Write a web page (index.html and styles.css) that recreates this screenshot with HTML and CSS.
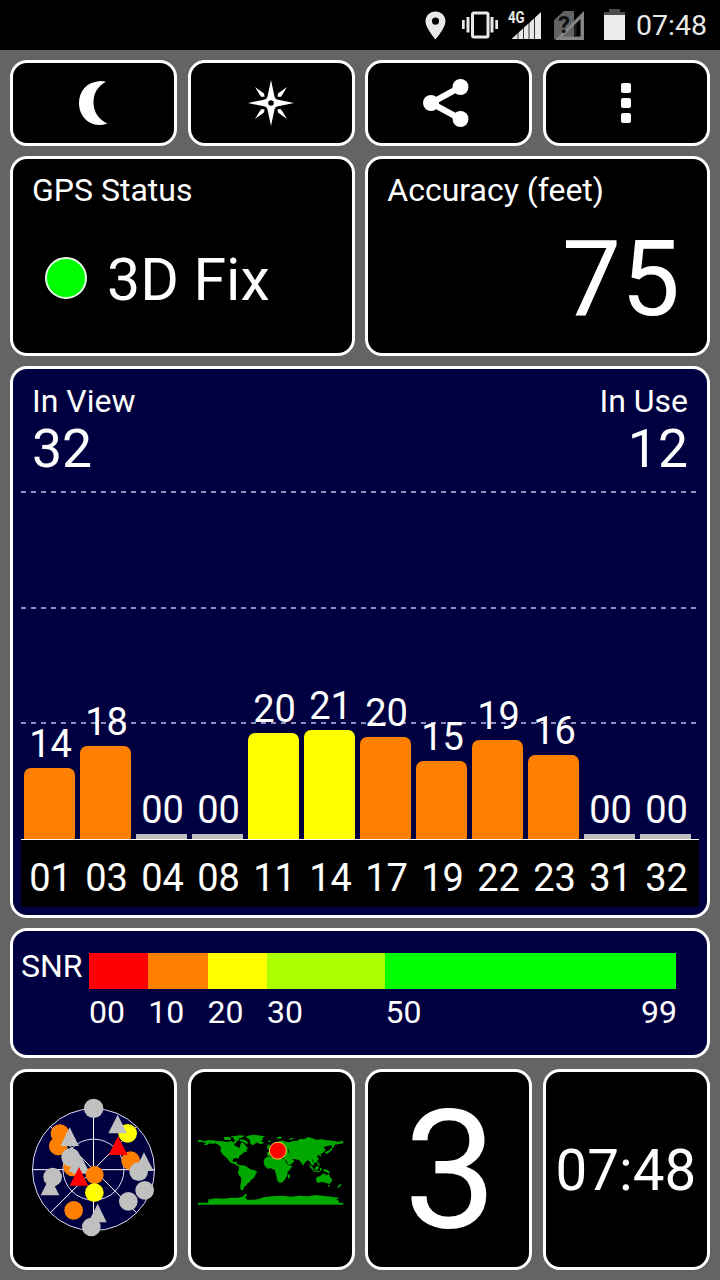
FILE: index.html
```html
<!DOCTYPE html>
<html lang="en">
<head>
    <meta charset="UTF-8">
    <meta name="viewport" content="width=device-width, initial-scale=1.0">
    <title>GPS Test</title>
    <link rel="stylesheet" href="styles.css">
</head>
<body>
    <!-- Phone status bar -->
    <header class="status-bar">
        <svg class="icon-pin" width="21" height="29" viewBox="0 0 21 29">
            <path fill="#e8e8e8" fill-rule="evenodd" d="M10.500 0.500C4.800 0.500 0.500 4.800 0.500 10.300C0.500 17 10.500 28.500 10.500 28.500S20.500 17 20.500 10.300C20.500 4.800 16.200 0.500 10.500 0.500ZM10.500 6.500a3.600 3.600 0 1 1 0 7.200a3.600 3.600 0 0 1 0-7.200Z"/>
        </svg>
        <svg class="icon-vibrate" width="36" height="28" viewBox="0 0 36 28">
            <rect x="10.500" y="2" width="15.500" height="24" rx="1.500" fill="none" stroke="#e8e8e8" stroke-width="3"/>
            <path fill="#e8e8e8" d="M0 9h2.700v9H0zM4.500 6h3v15.500h-3zM28.500 6h3v15.500h-3zM33.300 9H36v9h-2.700z"/>
        </svg>
        <div class="signal">
            <svg width="33" height="30" viewBox="0 0 33 30">
                <path fill="#e8e8e8" d="M33 2V29H3.500Z"/>
                <path stroke="#000" stroke-width="0.800" d="M10 20v9M15.500 16v13M21 11v18M26.500 6v23"/>
            </svg>
            <span class="signal-type">4G</span>
        </div>
        <div class="sim">
            <svg width="30" height="30" viewBox="0 0 30 30">
                <path fill="#636363" d="M10 1H20V29H0V10Z"/>
                <path fill="#858585" fill-rule="evenodd" d="M30 1V30H1ZM26.500 9L9 26.500H26.500Z"/>
                <path fill="#636363" d="M20 15.500V26.500H9Z"/>
                <path fill="#1c1c1c" d="M20 15.500L22.500 13V26.500H20Z"/>
            </svg>
            <span class="sim-mark">?</span>
        </div>
        <svg class="icon-battery" width="21" height="33" viewBox="0 0 21 33">
            <path fill="#4c4c4c" d="M5 1h11v3h5v4H0V4h5z"/>
            <path fill="#ececec" d="M0 7h21v25H0z"/>
        </svg>
        <span class="status-time">07:48</span>
    </header>

    <main class="dashboard">
        <!-- Toolbar buttons -->
        <nav class="row toolbar">
            <button class="panel" aria-label="Night mode">
                <svg width="29" height="44" viewBox="0 0 29 44">
                    <path fill="#fff" d="M27 0.800C24.500 0.100 22 0 20 0.200C8 1 0 10 0 22S8 43.500 20 44C23 44.100 26 43.700 28.500 42.600C20 39 14.500 31 14.500 21.500C14.500 12 19 5 27 0.800Z"/>
                </svg>
            </button>
            <button class="panel" aria-label="Compass">
                <svg width="46" height="46" viewBox="-23 -23 46 46">
                    <path fill="#fff" fill-rule="evenodd" d="M0-23L3.600-6Q4.200-4.200 6-3.600L23 0L6 3.600Q4.200 4.200 3.600 6L0 23L-3.600 6Q-4.200 4.200-6 3.600L-23 0L-6-3.600Q-4.200-4.200-3.600-6ZM0-2.800a2.800 2.800 0 1 0 0 5.600a2.800 2.800 0 0 0 0-5.600Z"/>
                    <path fill="#fff" d="M16-16L7-9.500L6.500-6.500L9.500-6L11.500-8.500ZM-16-16L-7-9.500L-6.500-6.500L-9.500-6L-11.500-8.500ZM16 16L7 9.500L6.500 6.500L9.500 6L11.500 8.500ZM-16 16L-7 9.500L-6.500 6.500L-9.500 6L-11.500 8.500Z"/>
                </svg>
            </button>
            <button class="panel share" aria-label="Share">
                <svg width="46" height="48" viewBox="0 0 46 48">
                    <path fill="none" stroke="#fff" stroke-width="6" d="M37.500 8L8 24L37.500 40"/>
                    <g fill="#fff"><circle cx="37.500" cy="8" r="8"/><circle cx="8" cy="24" r="8"/><circle cx="37.500" cy="40" r="8"/></g>
                </svg>
            </button>
            <button class="panel" aria-label="More">
                <svg width="10" height="40" viewBox="0 0 10 40">
                    <g fill="#fff"><rect width="10" height="10" rx="2"/><rect y="15" width="10" height="10" rx="2"/><rect y="30" width="10" height="10" rx="2"/></g>
                </svg>
            </button>
        </nav>

        <section class="row summary">
            <div class="panel">
                <div class="label">GPS Status</div>
                <div class="fix">
                    <span class="fix-light"></span>
                    <span class="fix-text">3D Fix</span>
                </div>
            </div>
            <div class="panel">
                <div class="label">Accuracy (feet)</div>
                <div class="accuracy">75</div>
            </div>
        </section>

        <!-- Satellite signal chart -->
        <section class="panel chart">
            <div class="counts">
                <div><div class="label">In View</div><div class="count">32</div></div>
                <div class="in-use"><div class="label">In Use</div><div class="count">12</div></div>
            </div>
            <div class="plot">
                <div class="sat"><span>14</span><div class="bar orange" style="height: 71px"></div></div>
                <div class="sat"><span>18</span><div class="bar orange" style="height: 93px"></div></div>
                <div class="sat"><span>00</span><div class="bar none" style="height: 5px"></div></div>
                <div class="sat"><span>00</span><div class="bar none" style="height: 5px"></div></div>
                <div class="sat"><span>20</span><div class="bar yellow" style="height: 106px"></div></div>
                <div class="sat"><span>21</span><div class="bar yellow" style="height: 109px"></div></div>
                <div class="sat"><span>20</span><div class="bar orange" style="height: 102px"></div></div>
                <div class="sat"><span>15</span><div class="bar orange" style="height: 78px"></div></div>
                <div class="sat"><span>19</span><div class="bar orange" style="height: 99px"></div></div>
                <div class="sat"><span>16</span><div class="bar orange" style="height: 84px"></div></div>
                <div class="sat"><span>00</span><div class="bar none" style="height: 5px"></div></div>
                <div class="sat"><span>00</span><div class="bar none" style="height: 5px"></div></div>
            </div>
            <div class="ids">
                <span>01</span><span>03</span><span>04</span><span>08</span><span>11</span><span>14</span>
                <span>17</span><span>19</span><span>22</span><span>23</span><span>31</span><span>32</span>
            </div>
        </section>

        <!-- SNR colour key -->
        <section class="panel snr">
            <div class="snr-label">SNR</div>
            <div class="scale">
                <div class="step red"><i></i><span>00</span></div>
                <div class="step orange"><i></i><span>10</span></div>
                <div class="step yellow"><i></i><span>20</span></div>
                <div class="step lime"><i></i><span>30</span></div>
                <div class="step green"><i></i><span class="ends"><b>50</b><b>99</b></span></div>
            </div>
        </section>

        <section class="row pages">
            <!-- Sky view -->
            <div class="panel">
                <svg width="126.670" height="145.670" viewBox="60 80 380 437">
                    <circle cx="250.500" cy="298" r="183" fill="#000040" stroke="#dcdcf4" stroke-width="3"/>
                    <circle cx="250.500" cy="298" r="91.500" fill="none" stroke="#dcdcf4" stroke-width="3"/>
                    <path stroke="#fff" stroke-width="3" d="M67.500 298H433.500M250.500 115V481M121 168.500L380 427.500M380 168.500L121 427.500"/>
                    <g fill="#c0c0c0"><circle cx="251" cy="114" r="29"/></g>
                    <g fill="#ff8000">
                        <circle cx="150" cy="190" r="28"/><circle cx="145" cy="227" r="28"/>
                        <circle cx="188" cy="290" r="28"/><circle cx="362" cy="271" r="28"/>
                        <circle cx="191" cy="420" r="28"/>
                    </g>
                    <circle cx="353" cy="189" r="28" fill="#ffff00"/>
                    <g fill="#c0c0c0">
                        <path d="M179 171L207 227H151ZM323 133L351 189H295ZM402 246L431 302H374Z"/>
                        <circle cx="182" cy="261" r="28"/>
                        <circle cx="386" cy="304" r="28"/><circle cx="404" cy="360" r="28"/>
                        <circle cx="355" cy="393" r="28"/>
                        <path d="M201 248L232 304H176ZM212 256L241 310H186ZM120 319L148 375H92ZM263 400L290 456H235Z"/>
                        <circle cx="128" cy="320" r="28"/><circle cx="244" cy="470" r="28"/>
                    </g>
                    <path fill="#ff0000" d="M324 198L353 254H296Z"/>
                    <circle cx="254" cy="314" r="27" fill="#ff8000"/>
                    <path fill="#ff0000" d="M207 290L235 346H179Z"/>
                    <circle cx="253" cy="367" r="28" fill="#ffff00"/>
                </svg>
            </div>
            <!-- World map -->
            <div class="panel">
                <svg width="150" height="72.330" viewBox="33.500 70 450 217">
                    <g fill="#00a800">
                        <path d="M39 91H47L58 95L70 91L84 92L98 94L112 95L125 97L139 94L146 98L153 91L157 96L148 104L151 109L158 111L164 116L166 108L169 98L178 102L183 108L190 117L184 120L188 125L178 128L172 133L164 139L160 148L154 145L145 148L143 155L150 158L155 154L157 163L166 167L171 170L165 171L155 167L146 162L135 158L129 148L123 143L113 134L107 124L108 112L101 106L92 101L82 103L75 101L64 107L56 104L63 101L57 98L46 97L39 96Z"/>
                        <path d="M116 83L130 81L139 85L136 91L120 91ZM134 80L150 79L165 77L181 78L171 84L160 87L165 91L158 94L147 90L146 83ZM167 88L180 91L190 99L187 104L176 98L165 94Z"/>
                        <path d="M181 82L194 77L211 75L228 78L241 79L234 84L233 91L227 97L215 99L207 105L201 106L196 101L195 91L189 86ZM219 98L232 96L238 99L231 103L221 102Z"/>
                        <path d="M162 170L170 166L181 168L191 174L196 179L210 182L217 188L211 196L208 204L199 210L195 217L187 222L184 228L178 231L176 239L173 243L167 239L166 228L169 217L169 204L162 196L159 188L162 180Z"/>
                        <path d="M240 146L249 141L263 139L270 144L282 146L299 148L302 157L311 168H323L317 177L308 188L307 198L302 207L294 217L285 220L278 215L276 205L273 193L270 181L258 176L247 177L239 167L236 157ZM309 197L316 192L315 203L310 208Z"/>
                        <path d="M247 138V128L256 126L250 120L258 115L269 112L268 103L278 98L291 92L303 96L314 98L325 94L336 94L345 88L359 88L369 82L383 86L393 90L412 89L425 92L444 93L459 96L475 93V101L461 103L450 105L446 114L441 115L440 107L427 109L416 112L423 121L414 129L407 133L411 141L403 137L396 138L402 148L396 158L387 160L388 168L378 164L376 157L369 152L362 156L355 168L348 158L343 151L332 149L322 147L329 155L319 164L310 169L306 162L298 148L293 140L282 140L274 132L269 140L257 139Z"/>
                        <path d="M247 108L254 103L255 115L247 119ZM250 94L256 92L258 97L250 97ZM273 84L286 80L293 85L282 87ZM312 88L324 84L327 87L316 91ZM420 128L434 121L439 114L443 119L434 128L424 134Z"/>
                        <path d="M372 163L381 170L388 179L383 181L376 173ZM390 174L398 168L403 173L398 181L391 180ZM384 181L405 185L402 188L384 185ZM405 176L411 174L409 184L405 185ZM414 178L427 181L437 188L430 190L417 184ZM396 156L402 160L406 169L399 166Z"/>
                        <path d="M395 203L406 199L414 192L421 192L425 198L431 191L435 201L442 209L440 217L433 223L422 219L410 217L398 220L393 211ZM429 226L435 225L433 231L429 231ZM463 225L470 222L468 228L459 235L457 232Z"/>
                        <path d="M39 279H68L72 275L67 270L91 266L116 267L137 264L159 264L173 261L182 252L187 255L181 263L187 270L207 270L221 268L238 262L261 260L294 258L319 261L342 258L371 260L392 256L421 259L439 261L463 264L454 270L463 274L461 279H475V285H39Z"/>
                    </g>
                    <path fill="none" stroke="#000" stroke-width="2" d="M302 151L311 166M310 119L313 132M385 157L382 149M256 140L278 142"/>
                    <circle cx="279" cy="123" r="25.500" fill="#ff0000" stroke="#ffd040" stroke-width="3"/>
                </svg>
            </div>
            <div class="panel fix-number">3</div>
            <div class="panel clock">07:48</div>
        </section>
    </main>
</body>
</html>
```
FILE: styles.css
```css
* {
    box-sizing: border-box;
}

body, html {
    margin: 0;
    padding: 0;
    width: 720px;
    height: 1280px;
    overflow: hidden;
    font-family: Roboto, sans-serif;
    background-color: #646464;
    color: #ffffff;
}

svg {
    display: block;
    flex: none;
}

/* Status bar */
.status-bar {
    display: flex;
    align-items: center;
    height: 50px;
    padding-left: 425px;
    background-color: #000000;
    color: #e8e8e8;
}

.icon-vibrate {
    margin-left: 16px;
}

.signal {
    position: relative;
    margin-left: 10px;
}

.signal-type {
    position: absolute;
    top: 0;
    left: 0;
    font-size: 16px;
    line-height: 16px;
    font-weight: bold;
    transform: scaleX(0.83);
    transform-origin: left;
}

.sim {
    position: relative;
    margin-left: 13px;
}

.sim-mark {
    position: absolute;
    top: 3px;
    left: 4px;
    font-size: 24px;
    line-height: 24px;
    font-weight: bold;
    color: #111111;
}

.icon-battery {
    margin-left: 20px;
    margin-top: -2px;
}

.status-time {
    margin-left: 11px;
    font-size: 28.5px;
    line-height: 28px;
    margin-top: 2px;
}

/* Panels */
.dashboard {
    display: flex;
    flex-direction: column;
    gap: 10px;
    padding: 10px;
}

.row {
    display: grid;
    column-gap: 10.5px;
}

.toolbar, .pages {
    grid-template-columns: repeat(4, 1fr);
}

.summary {
    grid-template-columns: 1fr 1fr;
    height: 200px;
}

.panel {
    min-width: 0;
    margin: 0;
    padding: 0;
    border: 3px solid #ffffff;
    border-radius: 17px;
    background-color: #000000;
    color: #ffffff;
}

.toolbar {
    height: 86px;
}

.toolbar .panel, .pages .panel {
    display: flex;
    justify-content: center;
    align-items: center;
}

.share svg {
    margin-right: 5px;
}

.label {
    font-size: 32px;
    line-height: 32px;
}

.summary .panel {
    padding: 15px 19px 0;
}

.fix {
    display: flex;
    align-items: center;
    margin-top: 44px;
    padding-left: 13px;
}

.fix-light {
    width: 42px;
    height: 42px;
    margin-top: -4px;
    border: 2px solid #e8ffe8;
    border-radius: 50%;
    background-color: #00ff00;
}

.fix-text {
    margin-left: 20px;
    font-size: 59px;
    line-height: 59px;
}

.accuracy {
    margin-top: 21px;
    padding-right: 8px;
    font-size: 105px;
    line-height: 105px;
    text-align: right;
}

/* Signal chart */
.chart {
    height: 552px;
    padding: 16px 8px 0;
    background-color: #000040;
}

.counts {
    display: flex;
    justify-content: space-between;
    padding: 0 11px;
}

.in-use {
    text-align: right;
}

.count {
    margin-top: 5px;
    font-size: 53.5px;
    line-height: 53px;
}

.plot {
    --dash: repeating-linear-gradient(to right, #9090bc 0 5px, transparent 5px 10px);
    display: grid;
    grid-template-columns: repeat(12, 51px);
    column-gap: 5px;
    height: 349px;
    margin-top: 16px;
    padding-left: 3px;
    border-bottom: 1px solid #ffffff;
    background: var(--dash) 0 0 / 100% 2px no-repeat,
                var(--dash) 0 116px / 100% 2px no-repeat,
                var(--dash) 0 231px / 100% 2px no-repeat;
}

.sat {
    display: flex;
    flex-direction: column;
    justify-content: flex-end;
    font-size: 38px;
    line-height: 38px;
    text-align: center;
}

.sat span {
    margin-bottom: 5px;
    padding-left: 2px;
}

.bar {
    border-radius: 7px 7px 0 0;
}

.bar.orange { background-color: #ff8000; }
.bar.yellow { background-color: #ffff00; }
.bar.none { background-color: #c0c0c0; border-radius: 0; }

.ids {
    display: grid;
    grid-template-columns: repeat(12, 51px);
    column-gap: 5px;
    height: 67px;
    padding: 19px 0 0 4px;
    background-color: #000000;
    font-size: 38px;
    line-height: 38px;
    text-align: center;
}

/* SNR key */
.snr {
    display: flex;
    height: 130px;
    padding: 22px 31px 0 8px;
    background-color: #000040;
    font-size: 32px;
    line-height: 32px;
}

.snr-label {
    width: 68px;
    margin-top: -3px;
}

.scale {
    display: flex;
    flex: 1;
}

.step {
    flex: 10 0 0;
}

.step i {
    display: block;
    height: 36px;
    margin-bottom: 7px;
}

.step.lime { flex-grow: 20; }
.step.green { flex-grow: 49; }

.red i { background-color: #ff0000; }
.orange i { background-color: #ff8000; }
.yellow i { background-color: #ffff00; }
.lime i { background-color: #aaff00; }
.green i { background-color: #00ff00; }

.ends {
    display: flex;
    justify-content: space-between;
    margin-right: -1px;
}

.ends b {
    font-weight: normal;
}

/* Bottom row */
.pages {
    height: 201px;
    margin-top: 1px;
}

.pages .fix-number {
    padding: 2px 0 0 3px;
    font-size: 166px;
    line-height: 193px;
}

.pages .clock {
    padding: 2px 1px 0 0;
    font-size: 56.5px;
}
```
